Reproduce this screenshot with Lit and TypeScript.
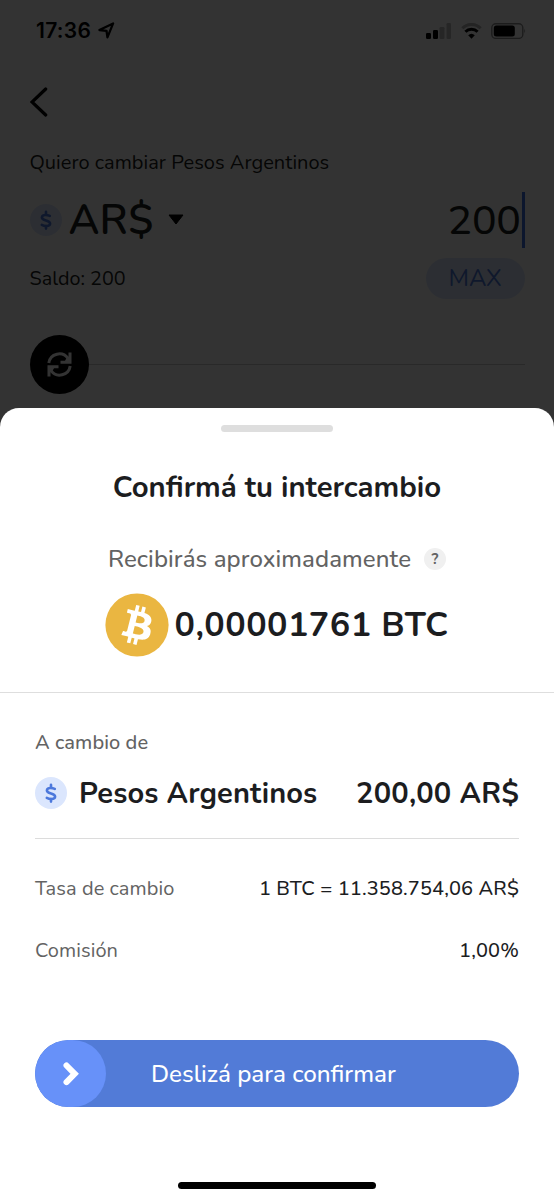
import { LitElement, html, css, svg } from "lit";
import { customElement } from "lit/decorators.js";

const dollar = svg`<svg viewBox="0 0 32 32" width="32" height="32">
  <g fill="none" stroke="currentColor" stroke-width="2.6" stroke-linecap="round" stroke-linejoin="round">
    <path d="M16 7.800v2.800M16 22v2.600"/>
    <path d="M19.800 11.900c-1.300-.6-2.700-.9-4.200-.9-2.300 0-3.700.9-3.700 2.500 0 3.700 8.200 2.200 8.200 6 0 1.700-1.600 2.500-3.900 2.500-1.700 0-3.100-.4-4.400-1.100"/>
  </g></svg>`;

const bitcoin = svg`<svg viewBox="0 0 32 32" width="64" height="64">
  <circle cx="16" cy="16" r="15.800" fill="#eab641"/>
  <path fill="#fff" d="M23.189 14.02c.314-2.096-1.283-3.223-3.465-3.975l.708-2.84-1.728-.43-.69 2.765c-.454-.114-.92-.22-1.385-.326l.695-2.783L15.596 6l-.708 2.839c-.376-.086-.746-.17-1.104-.26l.002-.009-2.384-.595-.46 1.846s1.283.294 1.256.312c.7.175.826.638.805 1.006l-.806 3.235c.048.012.11.03.18.057l-.183-.045-1.13 4.532c-.086.212-.303.531-.793.41.018.025-1.256-.313-1.256-.313l-.858 1.978 2.25.561c.418.105.828.215 1.231.318l-.715 2.872 1.727.43.708-2.84c.472.127.93.245 1.378.357l-.706 2.828 1.728.43.715-2.866c2.948.558 5.164.333 6.097-2.333.752-2.146-.037-3.385-1.588-4.192 1.13-.26 1.98-1.003 2.207-2.538zm-3.95 5.538c-.533 2.147-4.148.986-5.32.695l.95-3.805c1.172.293 4.929.872 4.37 3.11zm.535-5.569c-.487 1.953-3.495.96-4.47.717l.86-3.45c.975.243 4.118.696 3.61 2.733z"/></svg>`;

@customElement("exchange-form")
class ExchangeForm extends LitElement {
  static styles = css`
    :host { display: block; color: #1d1e20; padding: 0 29.500px; }
    * { box-sizing: border-box; }
    svg { display: block; flex: none; }
    .status { display: flex; align-items: center; height: 61px; color: #000; margin: 0 -1px 0 6.500px; }
    .time { font: 600 21px/30px Inter, sans-serif; letter-spacing: .3px; margin-right: 6.500px; }
    .signal { margin-left: auto; margin-right: 10px; }
    .battery { margin-left: 9px; }
    .back { display: flex; align-items: center; height: 82px; }
    .label { font-size: 20px; line-height: 40px; height: 38px; letter-spacing: .03px; }
    .amount { display: flex; align-items: center; height: 77px; font-size: 41px; }
    .coin { width: 32px; height: 32px; border-radius: 50%; background: #dbe6fd; color: #4c78dc; margin-right: 7px; }
    .code { font-weight: 600; font-size: 42px; padding-top: 2px; letter-spacing: .2px; }
    .caret { margin-left: 14.500px; }
    .value { margin-left: auto; font-weight: 500; letter-spacing: -.3px; padding-top: 1px; }
    .cursor { width: 3px; height: 56px; background: #3c6fe0; margin-left: 1px; }
    .balance { display: flex; align-items: center; justify-content: space-between; height: 41px; font-size: 19.800px; }
    .max { width: 99px; height: 41px; line-height: 41px; border-radius: 21px; background: #dbe6fd; color: #4c78dc; text-align: center; font-size: 24px; }
    .swap { display: flex; align-items: center; margin-top: 36px; }
    .disc { width: 59px; height: 59px; border-radius: 50%; background: #000; flex: none; }
    .rule { height: 1px; flex: 1; background: #ccc; }
  `;
  render() {
    return html`
      <div class="status">
        <span class="time">17:36</span>
        <svg width="17" height="17" viewBox="0 0 18 18"><path d="M1.500 8.500 16 1.500 10 16.300 9 9.300z" fill="none" stroke="#000" stroke-width="2.400" stroke-linejoin="round"/></svg>
        <svg class="signal" width="25" height="16" viewBox="0 0 25 16"><rect x="0" y="10" width="5" height="6" rx="1.300"/><rect x="7" y="7" width="5" height="9" rx="1.300"/><g opacity=".25"><rect x="13.500" y="4" width="5" height="12" rx="1.300"/><rect x="20.500" y="0" width="4.500" height="16" rx="1.300"/></g></svg>
        <svg width="21" height="16" viewBox="0 0 21 16"><g fill="none" stroke="#000" stroke-width="3"><path opacity=".3" d="M1.300 5.300a13 13 0 0 1 18.400 0"/><path d="M4.400 8.700a8.600 8.600 0 0 1 12.200 0"/></g><path d="M10.500 15.800 7.200 12.300a4.800 4.800 0 0 1 6.600 0z"/></svg>
        <svg class="battery" width="35" height="16" viewBox="0 0 35 16"><rect x=".8" y=".8" width="31" height="14.600" rx="4" fill="none" stroke="#000" stroke-opacity=".45" stroke-width="1.400"/><rect x="2.800" y="2.600" width="21" height="11" rx="2.500"/><path opacity=".5" d="M33.300 5.600q1.700 2.400 0 5z"/></svg>
      </div>
      <div class="back"><svg width="18" height="30" viewBox="0 0 18 30"><path d="M15.700 2 2 15l13.700 13" fill="none" stroke="#000" stroke-width="3.200" stroke-linecap="round"/></svg></div>
      <div class="label">Quiero cambiar Pesos Argentinos</div>
      <div class="amount">
        <div class="coin">${dollar}</div><span class="code">AR$</span>
        <svg class="caret" width="16" height="11" viewBox="0 0 16 11"><path d="M1 1h14L8 10z" stroke="#000" stroke-linejoin="round"/></svg>
        <span class="value">200</span><div class="cursor"></div>
      </div>
      <div class="balance"><span>Saldo: 200</span><div class="max">MAX</div></div>
      <div class="swap">
        <div class="disc"><svg width="59" height="59" viewBox="0 0 59 59"><g fill="none" stroke="#fff" stroke-width="3"><path d="M18.800 28A10.600 10.600 0 0 1 38 23.500L36 27M40 17.500v9.700H30.500"/><path d="M40.200 31A10.600 10.600 0 0 1 21 35.500L23 32M19 41.500v-9.700H28.500"/></g></svg></div>
        <div class="rule"></div>
      </div>`;
  }
}

@customElement("confirm-sheet")
class ConfirmSheet extends LitElement {
  static styles = css`
    :host { display: flex; flex-direction: column; height: 792px; background: #fff; border-radius: 19px 19px 0 0; color: #1c1d1f; }
    * { box-sizing: border-box; }
    svg { display: block; flex: none; }
    .handle { width: 112px; height: 7px; border-radius: 3.500px; background: #dedede; margin: 17px auto 30px; }
    .title { font-size: 29.300px; font-weight: 700; line-height: 50px; text-align: center; height: 50px; }
    .receive { display: flex; align-items: center; justify-content: center; margin-top: 22px; height: 50px; font-size: 24px; color: #636363; }
    .lead { font-weight: 500; letter-spacing: .1px; }
    .help { width: 22px; height: 22px; border-radius: 50%; background: #f0f0f0; margin-left: 13px; font-size: 15px; font-weight: 700; line-height: 22px; text-align: center; }
    .total { display: flex; align-items: center; margin: 9px 0 35px 104.500px; height: 64px; font-size: 34px; font-weight: 700; }
    .sum { margin-left: 6px; letter-spacing: .5px; }
    .details { border-top: 1px solid #dedede; padding: 29px 35px 0; }
    .caption { font-size: 20px; line-height: 42px; height: 40px; color: #636363; font-weight: 500; letter-spacing: .08px; }
    .row { display: flex; align-items: center; justify-content: space-between; }
    .paid { padding-bottom: 14px; height: 77px; border-bottom: 1px solid #dcdcdc; font-size: 29px; font-weight: 700; }
    .peso { letter-spacing: .12px; }
    .price { letter-spacing: .2px; }
    .name { display: flex; align-items: center; gap: 12px; }
    .coin { width: 32px; height: 32px; border-radius: 50%; background: #dbe6fd; color: #4c78dc; }
    .fact { height: 62.500px; font-size: 20px; }
    .facts { padding-top: 18px; }
    .key { color: #636363; letter-spacing: .08px; }
    .rate, .fee { font-weight: 500; letter-spacing: .12px; }
    .slide { display: flex; align-items: center; height: 67px; margin: 58.400px 35px 0; border-radius: 34px; overflow: hidden; background: #527bd7; color: #fff; font-size: 24.200px; font-weight: 500; }
    .hint { padding-top: 2px; }
    .knob { width: 71px; height: 67px; border-radius: 35px; background: #6791f9; margin-right: 45px; }
    .home { width: 198px; height: 7px; border-radius: 3.500px; background: #000; margin: 75px auto 0 178px; }
  `;
  render() {
    return html`
      <div class="handle"></div>
      <div class="title"><span>Confirmá tu intercambio</span></div>
      <div class="receive"><span class="lead">Recibirás aproximadamente</span><span class="help">?</span></div>
      <div class="total">${bitcoin}<span class="sum">0,00001761 BTC</span></div>
      <div class="details">
        <div class="caption">A cambio de</div>
        <div class="row paid"><div class="name"><div class="coin">${dollar}</div><span class="peso">Pesos Argentinos</span></div><span class="price">200,00 AR$</span></div>
        <div class="facts">
          <div class="row fact"><span class="key">Tasa de cambio</span><span class="rate">1 BTC = 11.358.754,06 AR$</span></div>
          <div class="row fact"><span class="key">Comisión</span><span class="fee">1,00%</span></div>
        </div>
      </div>
      <div class="slide"><div class="knob"><svg width="71" height="67" viewBox="0 0 71 67"><path d="m31.500 25.500 8.200 8.300-8.200 8.300" fill="none" stroke="#fff" stroke-width="6" stroke-linecap="round"/></svg></div><span class="hint">Deslizá para confirmar</span></div>
      <div class="home"></div>`;
  }
}

@customElement("app-root")
class AppRoot extends LitElement {
  static styles = css`
    :host { display: block; position: relative; width: 554px; height: 1200px; overflow: hidden; background: #fff; font-family: Nunito, "Noto Sans", sans-serif; }
    .scrim { position: absolute; inset: 0; background: rgba(0, 0, 0, .8); }
    .sheet { position: absolute; left: 0; right: 0; bottom: 0; }
  `;
  render() {
    return html`<exchange-form></exchange-form><div class="scrim"></div><confirm-sheet class="sheet"></confirm-sheet>`;
  }
}
